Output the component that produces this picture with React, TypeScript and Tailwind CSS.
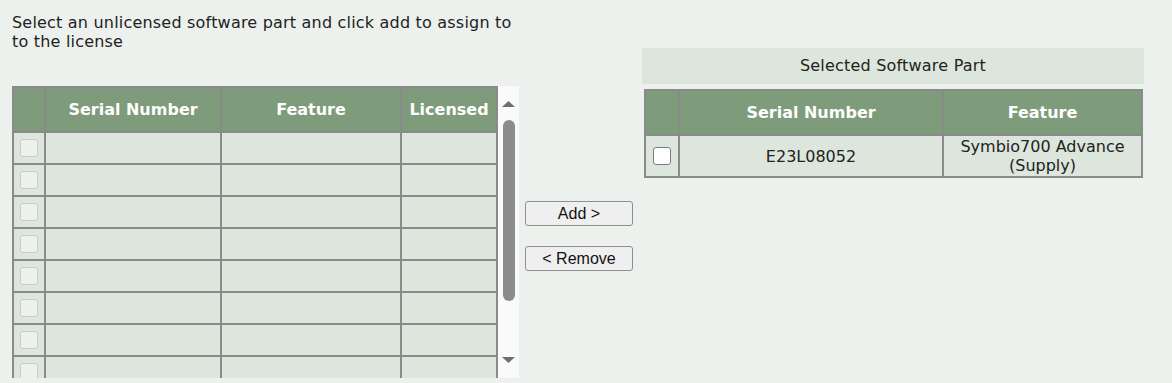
// Software part license assignment panel
const LEFT_ROWS = 8;

function LeftCheckbox() {
  return <div className="w-[18px] h-[18px] rounded-[3px] border border-[#c9ccc9] bg-[#eef0ee]" />;
}

function ScrollTrack() {
  return (
    <div className="w-[21px] h-full bg-[#fafafa] flex flex-col items-center pt-[15px] pb-[15px]">
      <svg width="13" height="6" viewBox="0 0 13 6" className="shrink-0">
        <polygon points="6.5,0 13,6 0,6" fill="#6e6e6e" />
      </svg>
      <div className="mt-[13px] w-[12px] h-[181px] rounded-full bg-[#8c8c8c]" />
      <div className="flex-1" />
      <svg width="13" height="6" viewBox="0 0 13 6" className="shrink-0">
        <polygon points="0,0 13,0 6.5,6" fill="#6e6e6e" />
      </svg>
    </div>
  );
}

function UnlicensedTable() {
  const headCell = "bg-[#7e9b7b] text-white font-bold text-[16px] flex items-center justify-center pt-[1px]";
  const cell = "bg-[#dde6dc] h-[30px]";
  return (
    <div className="flex h-[292px] overflow-hidden">
      <div className="bg-[#8a8a8a] p-[2px] pb-0 grid grid-cols-[30px_174px_178px_94px] auto-rows-[30px] grid-rows-[43px] gap-[2px] self-start">
        <div className={headCell} />
        <div className={headCell}>Serial Number</div>
        <div className={headCell}>Feature</div>
        <div className={headCell}>Licensed</div>
        {Array.from({ length: LEFT_ROWS }).map((_, i) => (
          <div key={i} className="contents">
            <div className={`${cell} flex items-center justify-center`}>
              <LeftCheckbox />
            </div>
            <div className={cell} />
            <div className={cell} />
            <div className={cell} />
          </div>
        ))}
      </div>
      <ScrollTrack />
    </div>
  );
}

function SelectedTable() {
  const headCell = "bg-[#7e9b7b] text-white font-bold text-[16px] flex items-center justify-center pt-[1px]";
  const cell = "bg-[#dde6dc] text-[#222] text-[16px] leading-[19px] flex items-center justify-center text-center";
  return (
    <div className="ml-[2px] mt-[5px] bg-[#8a8a8a] p-[2px] grid grid-cols-[32px_262px_197px] grid-rows-[43px_40px] gap-[2px] w-[499px]">
      <div className={headCell} />
      <div className={headCell}>Serial Number</div>
      <div className={headCell}>Feature</div>
      <div className={cell}>
        <div className="w-[18px] h-[18px] rounded-[3px] border border-[#7d7d7d] bg-white" />
      </div>
      <div className={cell}>E23L08052</div>
      <div className={cell}>
        Symbio700 Advance
        <br />
        (Supply)
      </div>
    </div>
  );
}

export default function App() {
  const btn =
    "h-[25px] w-[108px] rounded-[3px] border border-[#8f8f8f] bg-[#efefef] text-[16px] text-[#111] font-['Liberation_Sans',Arial,sans-serif] flex items-center justify-center";
  return (
    <div className="w-[1172px] h-[383px] bg-[#edf1ed] flex items-start font-['DejaVu_Sans',Verdana,sans-serif] overflow-hidden">
      <div className="pl-[12px] pt-[13px] w-[519px]">
        <p className="text-[16px] leading-[19px] tracking-[0.2px] text-[#222] whitespace-nowrap">
          Select an unlicensed software part and click add to assign to
          <br />
          to the license
        </p>
        <div className="mt-[35px]">
          <UnlicensedTable />
        </div>
      </div>

      <div className="ml-[6px] pt-[201px] flex flex-col gap-[20px]">
        <button className={btn}>Add &gt;</button>
        <button className={btn}>&lt; Remove</button>
      </div>

      <div className="ml-[9px] pt-[48px] w-[502px]">
        <div className="h-[36px] bg-[#dde6dc] flex items-center justify-center text-[16px] tracking-[0.2px] text-[#222]">
          Selected Software Part
        </div>
        <SelectedTable />
      </div>
    </div>
  );
}
